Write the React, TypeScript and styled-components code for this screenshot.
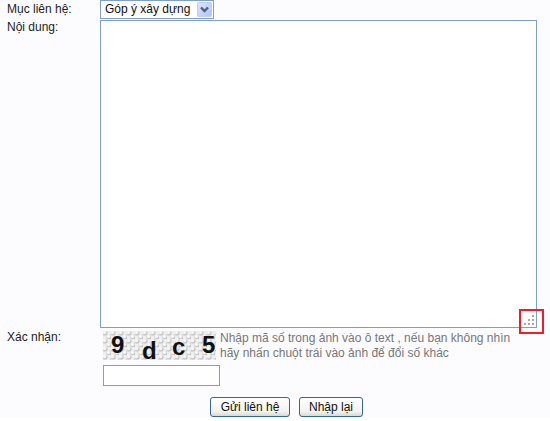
import React from 'react';
import styled, { createGlobalStyle } from 'styled-components';

const GlobalStyle = createGlobalStyle`
  * { box-sizing: border-box; }
  body {
    margin: 0;
    background: #fff;
    color: #222;
    font: 12px/15px "Liberation Sans", Arial, sans-serif;
  }
`;

const ContactForm = styled.form`
  display: flex;
  flex-direction: column;
  padding: 0 13px 1px 7px;
  background: #fcfcff;
`;

const Row = styled.div<{ $gap?: number }>`
  display: grid;
  grid-template-columns: 93px minmax(0, 1fr);
  align-items: start;
  margin-bottom: ${({ $gap = 0 }) => $gap}px;
`;

const Label = styled.label<{ $top?: number }>`
  padding-top: ${({ $top = 0 }) => $top}px;
`;

const SelectBox = styled.div`
  display: grid;
  width: 114px;
  height: 19px;
`;

const Select = styled.select`
  grid-area: 1 / 1;
  appearance: none;
  min-width: 0;
  padding: 0 0 0 4px;
  border: 1px solid #7f9fc6;
  border-radius: 0;
  background: #fff;
  color: #111;
  font: inherit;
`;

const Arrow = styled.svg`
  grid-area: 1 / 1;
  justify-self: end;
  align-self: center;
  width: 15px;
  height: 15px;
  margin-right: 2px;
  pointer-events: none;
`;

const MessageBox = styled.div`
  position: relative;
  display: flex;
`;

const Message = styled.textarea`
  flex: 1;
  min-width: 0;
  height: 308px;
  padding: 2px 4px;
  border: 1px solid #7f9fc6;
  border-radius: 0;
  background: #fff;
  font: inherit;
  resize: none;
`;

const GripMark = styled.svg`
  position: absolute;
  right: -7px;
  bottom: -6px;
  width: 25px;
  height: 25px;
  pointer-events: none;
`;

const Verification = styled.div`
  display: flex;
  flex-direction: column;
  gap: 4px;
  padding: 1px 0 0 3px;
`;

const CodeHint = styled.div`
  display: flex;
  gap: 4px;
`;

const Captcha = styled.svg`
  flex: none;
  width: 113px;
  height: 29px;
  overflow: visible;
`;

const Hint = styled.p`
  margin: 0;
  color: #777;
`;

const CodeInput = styled.input`
  width: 117px;
  height: 21px;
  padding: 1px 3px;
  border: 1px solid #7f9fc6;
  border-radius: 0;
  background: #fff;
  font: inherit;
`;

const Actions = styled.div`
  display: flex;
  justify-content: center;
  gap: 9px;
  padding-left: 29px;
`;

const Button = styled.button<{ $width: number }>`
  width: ${({ $width }) => $width}px;
  height: 20px;
  padding: 0;
  border: 1px solid #336699;
  border-radius: 3px;
  background: linear-gradient(#fff, #f3f2ec 75%, #dcd8ce);
  color: #111;
  font: inherit;
`;

const characters = [
  { value: '9', x: 8, y: 22 },
  { value: 'd', x: 39, y: 28 },
  { value: 'c', x: 69, y: 24 },
  { value: '5', x: 99, y: 22 },
];

const gripDots = [[13, 6], [9, 10], [13, 10], [5, 14], [9, 14], [13, 14]];

export default function App() {
  return (
    <>
      <GlobalStyle />
      <ContactForm onSubmit={(event) => event.preventDefault()}>
        <Row $gap={1}>
          <Label htmlFor="category" $top={2}>Mục liên hệ:</Label>
          <SelectBox>
            <Select id="category">
              <option>Góp ý xây dựng</option>
            </Select>
            <Arrow viewBox="0 0 15 15" aria-hidden="true">
              <defs>
                <linearGradient id="arrow-face" x2="1" y2="1">
                  <stop stopColor="#dce7ff" />
                  <stop offset="1" stopColor="#aec5f3" />
                </linearGradient>
              </defs>
              <rect x=".5" y=".5" width="14" height="14" rx="1" fill="url(#arrow-face)" stroke="#bdcff5" />
              <path d="M4 5.5l3.5 3.5L11 5.5" fill="none" stroke="#4d6185" strokeWidth="2.4" />
            </Arrow>
          </SelectBox>
        </Row>
        <Row $gap={2}>
          <Label htmlFor="message">Nội dung:</Label>
          <MessageBox>
            <Message id="message" />
            <GripMark viewBox="0 0 25 25" aria-hidden="true">
              <rect x="1" y="1" width="23" height="23" fill="none" stroke="#f01c28" strokeWidth="2" />
              {gripDots.map(([x, y]) => (
                <rect key={`${x}-${y}`} x={x} y={y} width="2" height="2" fill="#aaa69b" />
              ))}
            </GripMark>
          </MessageBox>
        </Row>
        <Row $gap={11}>
          <Label htmlFor="code">Xác nhận:</Label>
          <Verification>
            <CodeHint>
              <Captcha viewBox="0 0 113 29" role="img" aria-label="9 d c 5">
                <defs>
                  <radialGradient id="bead" cx=".4" cy=".35">
                    <stop stopColor="#fff" />
                    <stop offset=".6" stopColor="#ececec" />
                    <stop offset="1" stopColor="#c4c4c4" />
                  </radialGradient>
                  <pattern id="beads" width="8" height="8" patternUnits="userSpaceOnUse">
                    <rect width="8" height="8" fill="#eeeeee" />
                    <circle cx="2" cy="2" r="2.6" fill="url(#bead)" />
                    <circle cx="6" cy="6" r="2.6" fill="url(#bead)" />
                  </pattern>
                </defs>
                <rect width="113" height="29" fill="url(#beads)" />
                {characters.map(({ value, x, y }) => (
                  <text key={value} x={x} y={y} fill="#111" fontSize="24" fontWeight="700">{value}</text>
                ))}
              </Captcha>
              <Hint>
                Nhập mã số trong ảnh vào ô text , nếu bạn không nhìn
                <br />
                hãy nhấn chuột trái vào ảnh để đổi số khác
              </Hint>
            </CodeHint>
            <CodeInput id="code" type="text" />
          </Verification>
        </Row>
        <Actions>
          <Button type="submit" $width={80}>Gửi liên hệ</Button>
          <Button type="reset" $width={64}>Nhập lại</Button>
        </Actions>
      </ContactForm>
    </>
  );
}
